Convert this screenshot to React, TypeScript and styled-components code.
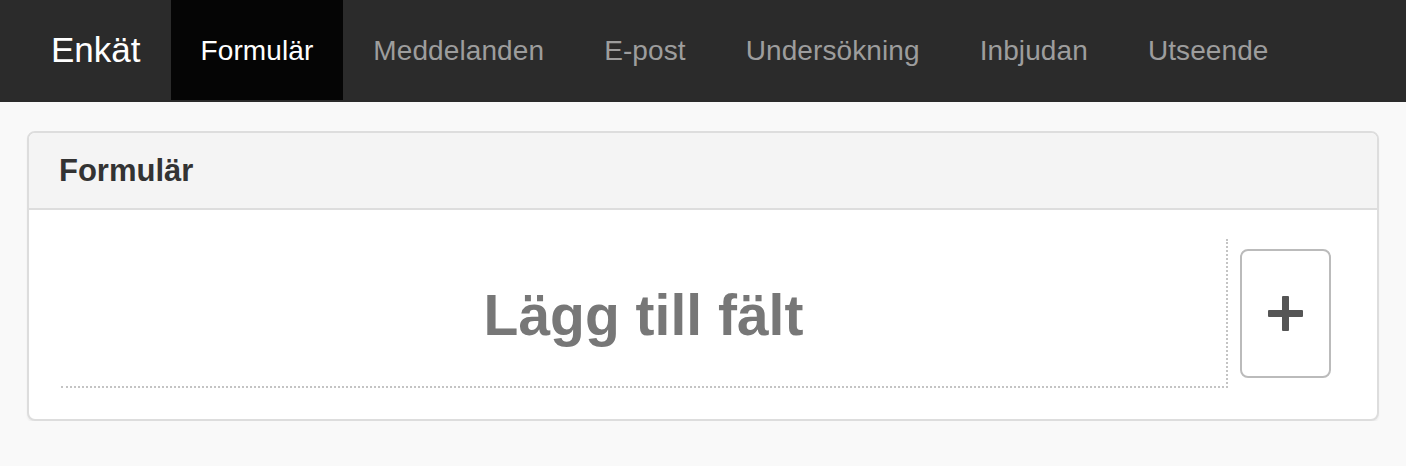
import styled, { createGlobalStyle } from "styled-components";

const GlobalStyle = createGlobalStyle`
  html, body {
    margin: 0;
    padding: 0;
    background: #f9f9f9;
    font-family: "Liberation Sans", Arial, Helvetica, sans-serif;
  }
  * { box-sizing: border-box; }
`;

const Navbar = styled.nav`
  display: flex;
  align-items: stretch;
  height: 102px;
  padding-left: 21px;
  background: #2b2b2b;
  border-bottom: 2px solid #2b2b2b;
`;

const Brand = styled.a`
  display: flex;
  align-items: center;
  padding: 0 30px;
  font-size: 35px;
  color: #ffffff;
  text-decoration: none;
`;

const NavList = styled.ul`
  display: flex;
  margin: 0;
  padding: 0;
  list-style: none;
`;

const NavItem = styled.li<{ $active?: boolean }>`
  display: flex;
  align-items: center;
  padding: 2px 30px 0;
  font-size: 28px;
  line-height: 40px;
  letter-spacing: 0.1px;
  background: ${(p) => (p.$active ? "#050505" : "transparent")};
  color: ${(p) => (p.$active ? "#ffffff" : "#9d9d9d")};
`;

const Main = styled.main`
  padding: 29px 27px 0;
`;

const Panel = styled.section`
  background: #ffffff;
  border: 2px solid #dddddd;
  border-radius: 8px;
  box-shadow: 0 2px 2px rgba(0, 0, 0, 0.05);
  overflow: hidden;
`;

const PanelHeading = styled.header`
  padding: 20px 30px;
  background: #f4f4f4;
  border-bottom: 2px solid #dddddd;
`;

const PanelTitle = styled.h3`
  margin: 0;
  font-size: 31px;
  line-height: 35px;
  font-weight: 700;
  color: #333333;
`;

const PanelBody = styled.div`
  display: flex;
  align-items: center;
  gap: 12px;
  padding: 29px 46px 31px 32px;
`;

const DropZone = styled.div`
  flex: 1;
  height: 149px;
  display: flex;
  align-items: center;
  justify-content: center;
  border-right: 2px dotted #c4c4c4;
  border-bottom: 2px dotted #c4c4c4;
`;

const DropText = styled.span`
  font-size: 57px;
  font-weight: 700;
  color: #777777;
  margin-top: 4px;
`;

const AddButton = styled.button`
  width: 91px;
  height: 129px;
  display: flex;
  align-items: center;
  justify-content: center;
  padding: 0;
  background: #ffffff;
  border: 2px solid #bbbbbb;
  border-radius: 8px;
  cursor: pointer;
`;

const tabs = ["Formulär", "Meddelanden", "E-post", "Undersökning", "Inbjudan", "Utseende"];

function PlusIcon() {
  return (
    <svg width="35" height="35" viewBox="0 0 35 35">
      <rect x="14" y="0" width="7" height="35" rx="1" fill="#555555" />
      <rect x="0" y="14" width="35" height="7" rx="1" fill="#555555" />
    </svg>
  );
}

export default function App() {
  return (
    <>
      <GlobalStyle />
      <Navbar>
        <Brand>Enkät</Brand>
        <NavList>
          {tabs.map((t, i) => (
            <NavItem key={t} $active={i === 0}>
              {t}
            </NavItem>
          ))}
        </NavList>
      </Navbar>
      <Main>
        <Panel>
          <PanelHeading>
            <PanelTitle>Formulär</PanelTitle>
          </PanelHeading>
          <PanelBody>
            <DropZone>
              <DropText>Lägg till fält</DropText>
            </DropZone>
            <AddButton aria-label="Lägg till">
              <PlusIcon />
            </AddButton>
          </PanelBody>
        </Panel>
      </Main>
    </>
  );
}
